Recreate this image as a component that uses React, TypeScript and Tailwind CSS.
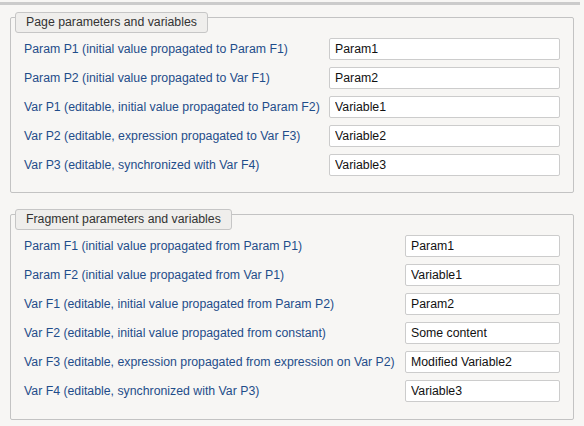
const pageRows = [
  { label: "Param P1 (initial value propagated to Param F1)", value: "Param1" },
  { label: "Param P2 (initial value propagated to Var F1)", value: "Param2" },
  { label: "Var P1 (editable, initial value propagated to Param F2)", value: "Variable1" },
  { label: "Var P2 (editable, expression propagated to Var F3)", value: "Variable2" },
  { label: "Var P3 (editable, synchronized with Var F4)", value: "Variable3" },
]

const fragmentRows = [
  { label: "Param F1 (initial value propagated from Param P1)", value: "Param1" },
  { label: "Param F2 (initial value propagated from Var P1)", value: "Variable1" },
  { label: "Var F1 (editable, initial value propagated from Param P2)", value: "Param2" },
  { label: "Var F2 (editable, initial value propagated from constant)", value: "Some content" },
  { label: "Var F3 (editable, expression propagated from expression on Var P2)", value: "Modified Variable2" },
  { label: "Var F4 (editable, synchronized with Var P3)", value: "Variable3" },
]

type Row = { label: string; value: string }

function Group({ title, rows, labelWidth, className }: { title: string; rows: Row[]; labelWidth: string; className: string }) {
  return (
    <div className={`ml-[10px] w-[564px] border border-[#c3c3c3] rounded-[2px] pl-[13px] pr-[13px] ${className}`}>
      <div className="-mt-[6px] -ml-[9px] flex w-fit h-[21px] items-center px-[10px] bg-[#efeeec] border border-[#c6c6c6] rounded-[3px] text-[12.3px] text-[#333]">
        {title}
      </div>
      <div className="mt-[5px] flex flex-col gap-[7px]">
        {rows.map((r) => (
          <div key={r.label} className="flex items-center h-[22px]">
            <div className={`${labelWidth} shrink-0 text-[12.3px] text-[#1f4d8a] whitespace-nowrap`}>{r.label}</div>
            <input
              readOnly
              value={r.value}
              className="flex-1 min-w-0 w-0 h-[22px] bg-white border border-[#cccccc] rounded-[2px] px-[5px] text-[12.3px] text-[#111] outline-none"
            />
          </div>
        ))}
      </div>
    </div>
  )
}

export default function App() {
  return (
    <div className="w-[584px] h-[426px] bg-[#f7f6f4] pt-[2px] overflow-hidden" style={{ fontFamily: '"Liberation Sans", Arial, sans-serif' }}>
      <div className="h-[3px] w-[580px] bg-[#cbcbcb]" />
      <Group title="Page parameters and variables" rows={pageRows} labelWidth="w-[305px]" className="mt-[12px] pb-[16px]" />
      <Group title="Fragment parameters and variables" rows={fragmentRows} labelWidth="w-[381px]" className="mt-[21px] pb-[17px]" />
    </div>
  )
}
